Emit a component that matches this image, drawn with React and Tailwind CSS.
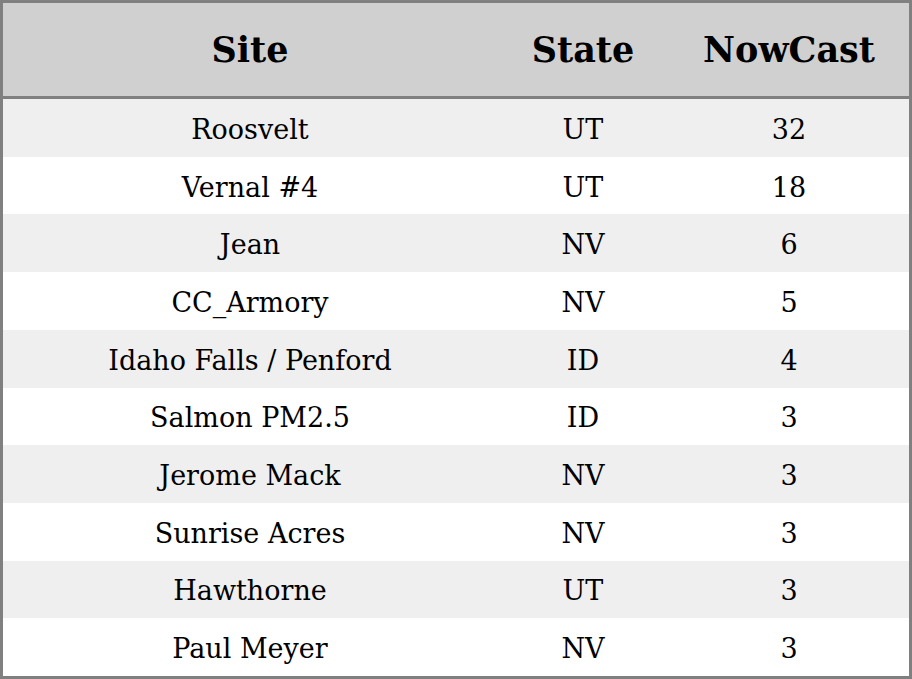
import React from "react";

const rows = [
  ["Roosvelt", "UT", "32"],
  ["Vernal #4", "UT", "18"],
  ["Jean", "NV", "6"],
  ["CC_Armory", "NV", "5"],
  ["Idaho Falls / Penford", "ID", "4"],
  ["Salmon PM2.5", "ID", "3"],
  ["Jerome Mack", "NV", "3"],
  ["Sunrise Acres", "NV", "3"],
  ["Hawthorne", "UT", "3"],
  ["Paul Meyer", "NV", "3"],
];

export default function App() {
  return (
    <div className="w-[912px] h-[679px] border-[3px] border-[#808080] bg-white flex flex-col text-black" style={{ fontFamily: '"DejaVu Serif", serif' }}>
      <div className="h-[93px] bg-[#d0d0d0] border-b-[3px] border-[#808080] grid grid-cols-[494px_172px_1fr] items-center text-[35px] leading-none font-bold box-content">
        <div className="text-center">Site</div>
        <div className="text-center">State</div>
        <div className="text-center">NowCast</div>
      </div>
      <div className="flex-1 flex flex-col">
        {rows.map((r, i) => (
          <div key={i} className={`flex-1 grid grid-cols-[494px_172px_1fr] items-center pt-[3px] text-[27px] leading-none ${i % 2 === 0 ? "bg-[#efefef]" : "bg-white"}`}>
            <div className="text-center">{r[0]}</div>
            <div className="text-center">{r[1]}</div>
            <div className="text-center">{r[2]}</div>
          </div>
        ))}
      </div>
    </div>
  );
}
